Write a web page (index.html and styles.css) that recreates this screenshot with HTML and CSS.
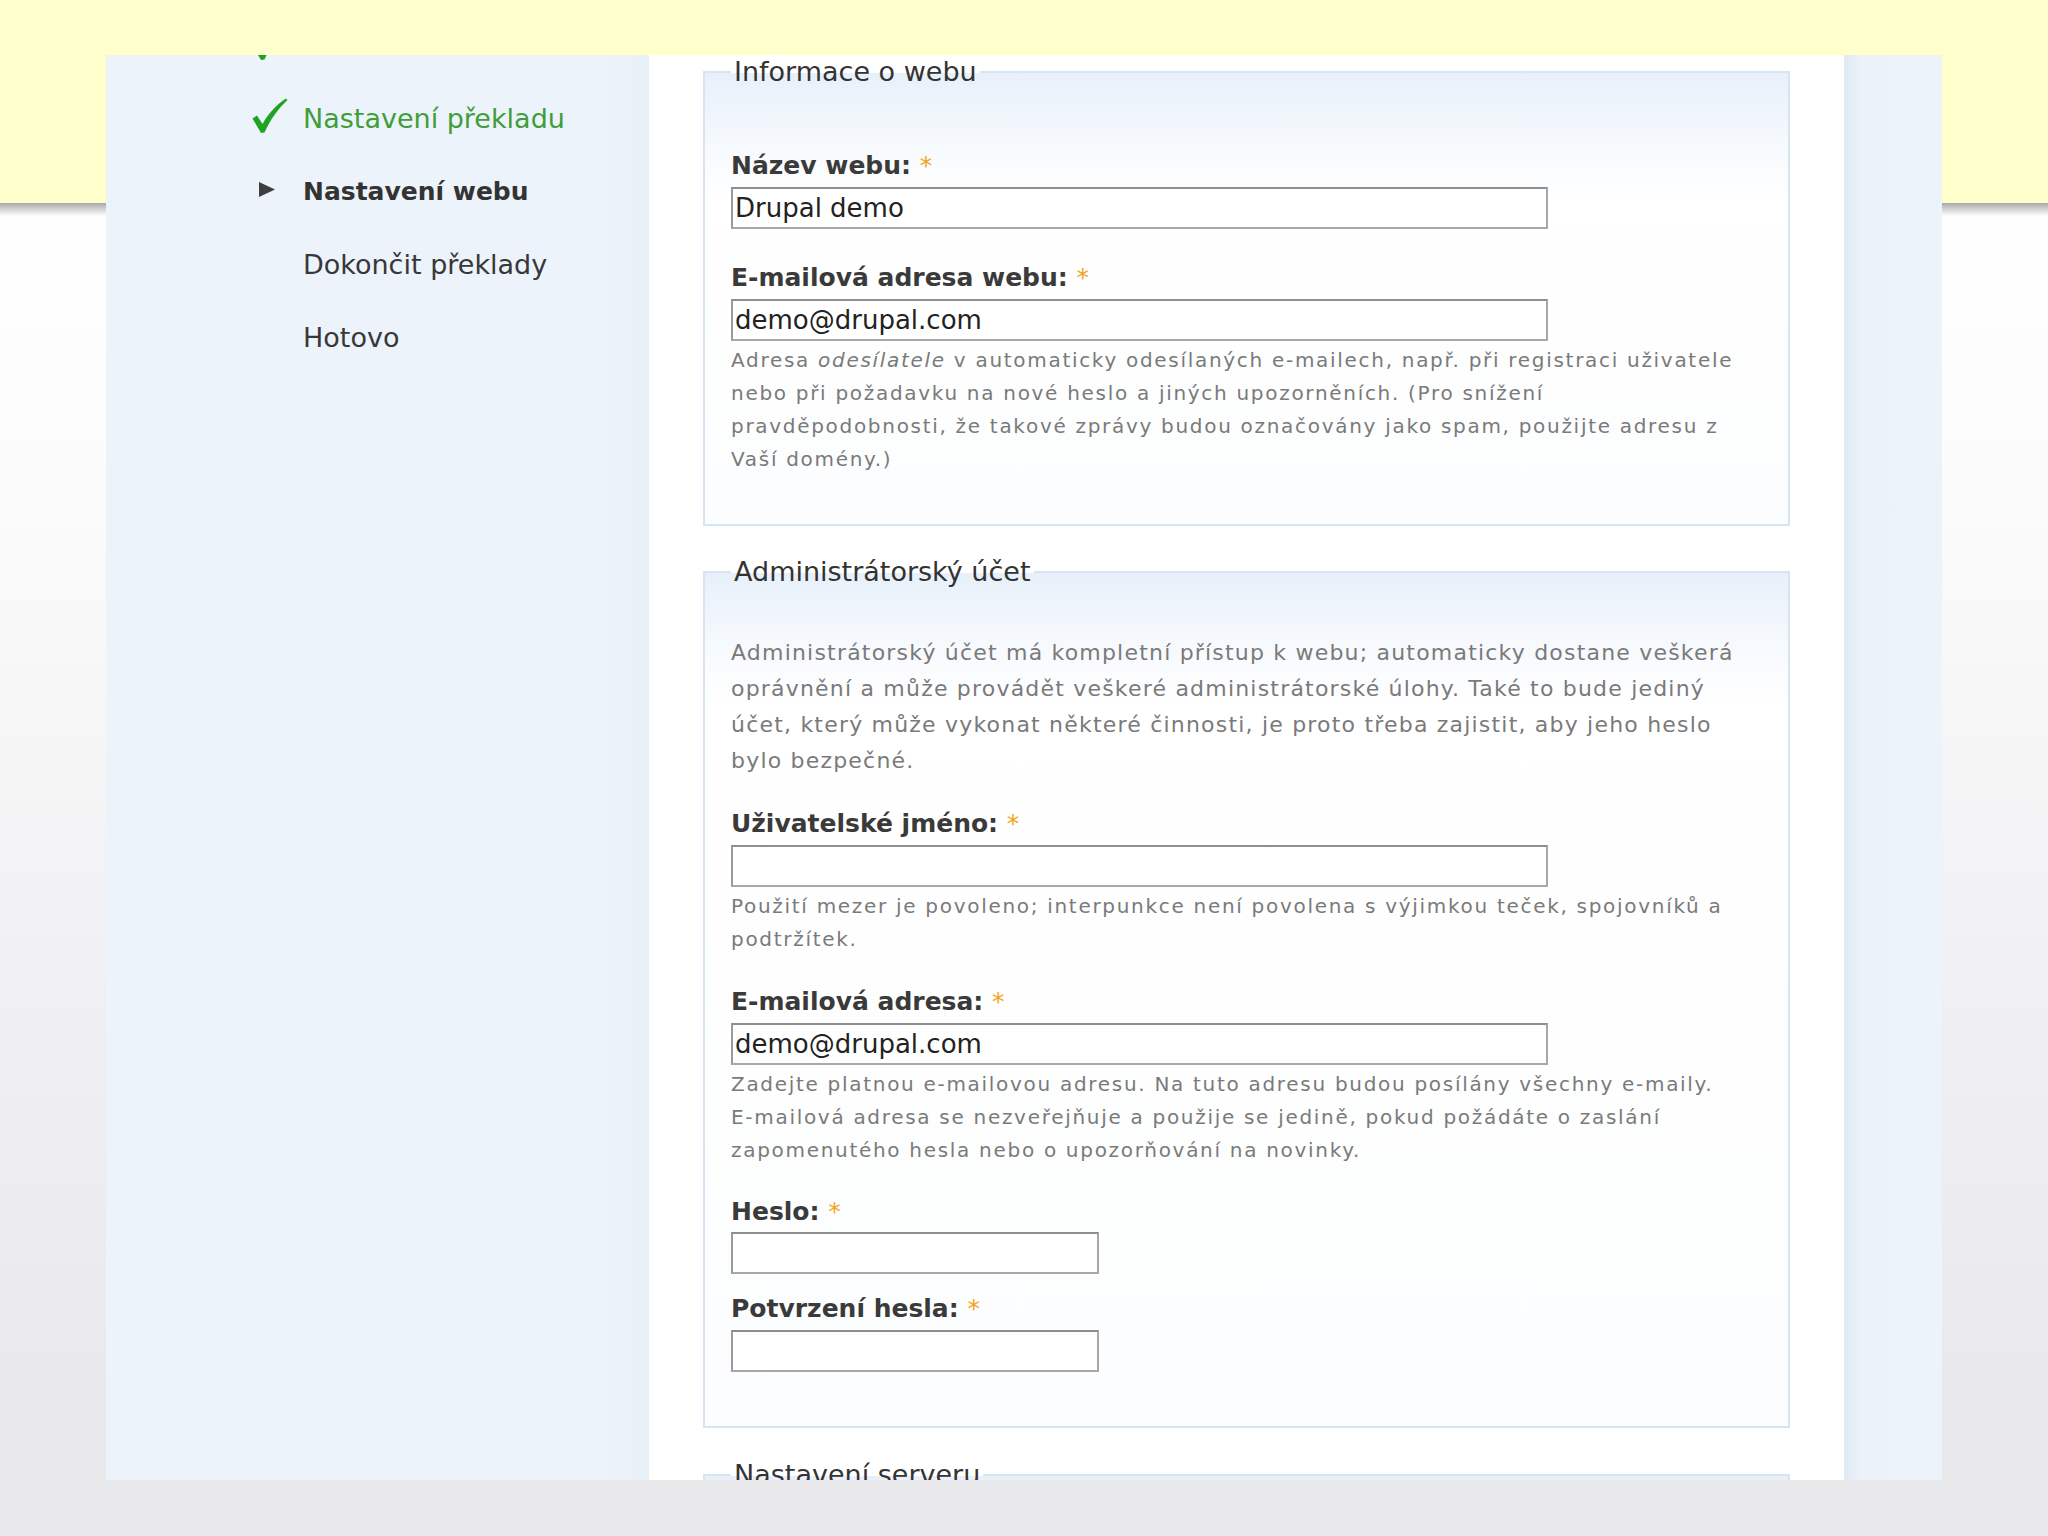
FILE: index.html
```html
<!DOCTYPE html>
<html lang="cs">
<head>
<meta charset="utf-8">
<title>Instalace Drupalu</title>
<link rel="stylesheet" href="styles.css">
</head>
<body>
<div class="window">
  <aside class="sidebar">
    <ol class="steps">
      <li class="step done"><span class="icon"><svg class="check" width="36" height="36" viewBox="0 0 36 36"><path d="M0.5 20.5 L5 17.5 L10.5 26 C16 16 24 7 34 0.5 L35.5 2 C26 11 18 22 12.5 34.5 L9 35 Z"/></svg></span><span class="label"></span></li>
      <li class="step done"><span class="icon"><svg class="check" width="36" height="36" viewBox="0 0 36 36"><path d="M0.5 20.5 L5 17.5 L10.5 26 C16 16 24 7 34 0.5 L35.5 2 C26 11 18 22 12.5 34.5 L9 35 Z"/></svg></span><span class="label">Nastavení překladu</span></li>
      <li class="step active"><span class="icon"><svg class="arrow" width="16" height="15" viewBox="0 0 16 15"><path d="M0 0 L16 7.5 L0 15 Z"/></svg></span><span class="label">Nastavení webu</span></li>
      <li class="step"><span class="icon"></span><span class="label">Dokončit překlady</span></li>
      <li class="step"><span class="icon"></span><span class="label">Hotovo</span></li>
    </ol>
  </aside>
  <main class="content">
    <form class="install-form">
      <fieldset class="group">
        <legend>Informace o webu</legend>
        <div class="form-item first">
          <label class="field-label">Název webu: <span class="req">*</span></label>
          <input class="text long" type="text" value="Drupal demo">
        </div>
        <div class="form-item">
          <label class="field-label">E-mailová adresa webu: <span class="req">*</span></label>
          <input class="text long" type="text" value="demo@drupal.com">
          <div class="description">Adresa <em>odesílatele</em> v automaticky odesílaných e-mailech, např. při registraci uživatele<br>nebo při požadavku na nové heslo a jiných upozorněních. (Pro snížení<br>pravděpodobnosti, že takové zprávy budou označovány jako spam, použijte adresu z<br>Vaší domény.)</div>
        </div>
      </fieldset>
      <fieldset class="group account">
        <legend>Administrátorský účet</legend>
        <p class="intro">Administrátorský účet má kompletní přístup k webu; automaticky dostane veškerá<br>oprávnění a může provádět veškeré administrátorské úlohy. Také to bude jediný<br>účet, který může vykonat některé činnosti, je proto třeba zajistit, aby jeho heslo<br>bylo bezpečné.</p>
        <div class="form-item after-intro">
          <label class="field-label">Uživatelské jméno: <span class="req">*</span></label>
          <input class="text long" type="text" value="">
          <div class="description">Použití mezer je povoleno; interpunkce není povolena s výjimkou teček, spojovníků a<br>podtržítek.</div>
        </div>
        <div class="form-item tight">
          <label class="field-label">E-mailová adresa: <span class="req">*</span></label>
          <input class="text long" type="text" value="demo@drupal.com">
          <div class="description">Zadejte platnou e-mailovou adresu. Na tuto adresu budou posílány všechny e-maily.<br>E-mailová adresa se nezveřejňuje a použije se jedině, pokud požádáte o zaslání<br>zapomenutého hesla nebo o upozorňování na novinky.</div>
        </div>
        <div class="form-item password">
          <label class="field-label">Heslo: <span class="req">*</span></label>
          <input class="text short" type="password" value="">
        </div>
        <div class="form-item confirm">
          <label class="field-label">Potvrzení hesla: <span class="req">*</span></label>
          <input class="text short" type="password" value="">
        </div>
      </fieldset>
      <fieldset class="group server">
        <legend>Nastavení serveru</legend>
      </fieldset>
    </form>
  </main>
  <div class="rail"></div>
</div>
</body>
</html>
```

FILE: styles.css
```css
html {
  height: 100%;
  background:
    linear-gradient(#ffffcc, #ffffcc) 0 0 / 100% 203px no-repeat,
    linear-gradient(#a9a9ab, rgba(255,255,255,0)) 0 203px / 100% 13px no-repeat,
    linear-gradient(#ffffff 203px, #fbfbfc 500px, #f0f0f2 1000px, #e9e8eb 1400px, #e9e8eb);
}

body {
  margin: 0;
  font-family: "DejaVu Sans", Verdana, sans-serif;
  color: #333;
}

.window {
  display: flex;
  margin: 55px 0 0 106px;
  width: 1836px;
  height: 1425px;
  overflow: hidden;
}

.sidebar {
  width: 543px;
  flex: none;
  background: linear-gradient(to right, #ecf3fa, #edf3fa 90%, #e8f0f8);
}

.steps {
  list-style: none;
  margin: -46px 0 0 0;
  padding: 0 0 0 143px;
}

.step {
  display: grid;
  grid-template-columns: 54px auto;
  align-items: center;
  height: 73px;
  font-size: 27px;
  line-height: 73px;
  color: #383838;
}

.step .icon {
  display: flex;
  align-items: center;
  height: 73px;
}

.check {
  margin: -6px 0 0 3px;
  fill: #1fa421;
}

.arrow {
  margin: -4px 0 0 10px;
  fill: #3e3e40;
}

.step.done .label {
  color: #3f9e3a;
}

.step.active .label {
  font-weight: bold;
  font-size: 25px;
  color: #333;
}

.content {
  width: 1195px;
  flex: none;
  background: #fff;
  box-sizing: border-box;
  padding: 2px 54px 0;
}

.rail {
  flex: 1;
  background: linear-gradient(to right, #e0eaf5, #ebf2f9 18px, #edf3fa);
}

.group {
  margin: 0 0 31px;
  padding: 48px 26px 48px 26px;
  border: 2px solid #d6e5f2;
  background: linear-gradient(#e7f0fa, #f6f9fd 70px, #ffffff 130px, #fcfdfe);
  min-width: 0;
}

.group.account {
  padding-bottom: 54px;
  margin-bottom: 32px;
}

.group.server {
  height: 200px;
}

.group legend {
  padding: 0 3px;
  font-size: 27px;
  line-height: 30px;
  color: #333;
}

.form-item {
  margin-top: 34px;
}

.form-item.first {
  margin-top: 16px;
}

.form-item.after-intro {
  margin-top: 30px;
}

.form-item.tight {
  margin-top: 31px;
}

.form-item.password {
  margin-top: 30px;
}

.form-item.password .field-label {
  margin-bottom: 5px;
}

.form-item.confirm {
  margin-top: 20px;
}

.field-label {
  display: block;
  font-size: 25px;
  line-height: 30px;
  font-weight: bold;
  color: #3a3a3a;
  margin-bottom: 6px;
}

.req {
  color: #f3a51b;
  font-weight: normal;
}

.text {
  display: block;
  box-sizing: border-box;
  height: 42px;
  margin: 0;
  padding: 0 2px;
  border: 2px solid #a8a8a8;
  border-top-color: #8e8e8e;
  border-left-color: #9a9a9a;
  background: #fff;
  font-family: "DejaVu Sans", Verdana, sans-serif;
  font-size: 26px;
  color: #222;
  outline: none;
}

.text.long {
  width: 817px;
}

.text.short {
  width: 368px;
}

.description {
  margin-top: 3px;
  font-size: 20px;
  line-height: 33px;
  letter-spacing: 1.7px;
  color: #7a7a7a;
  white-space: nowrap;
}

.intro {
  margin: 0;
  font-size: 22px;
  line-height: 36px;
  letter-spacing: 1.2px;
  color: #7a7a7a;
  white-space: nowrap;
}
```
